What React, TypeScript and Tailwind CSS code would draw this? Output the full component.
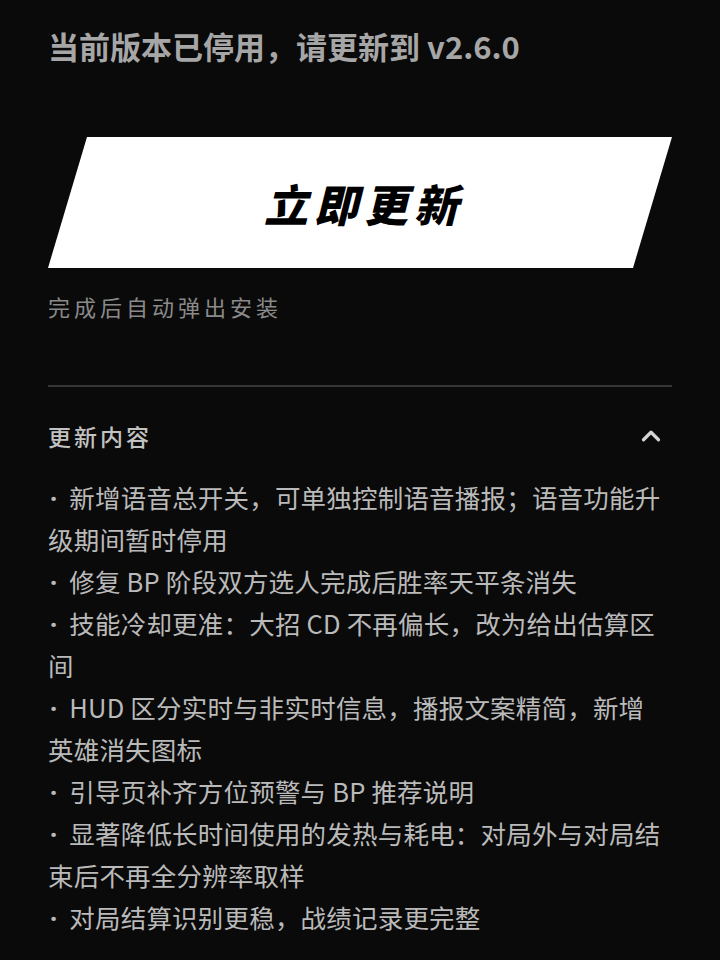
import { ChevronUp } from "lucide-react";

const notes = [
  "新增语音总开关，可单独控制语音播报；语音功能升级期间暂时停用",
  "修复 BP 阶段双方选人完成后胜率天平条消失",
  "技能冷却更准：大招 CD 不再偏长，改为给出估算区间",
  "HUD 区分实时与非实时信息，播报文案精简，新增英雄消失图标",
  "引导页补齐方位预警与 BP 推荐说明",
  "显著降低长时间使用的发热与耗电：对局外与对局结束后不再全分辨率取样",
  "对局结算识别更稳，战绩记录更完整",
];

export default function App() {
  return (
    <div className="min-h-[960px] w-full bg-[#0a0a0a] font-['Noto_Sans_CJK_SC','Noto_Sans',sans-serif] px-12 pt-[26px]">
      <h1 className="text-[31px] leading-[40px] font-bold text-[#a6a6a6]">
        当前版本已停用，请更新到 v2.6.0
      </h1>

      <button className="mt-[71px] flex h-[131px] w-full items-center justify-center bg-white [clip-path:polygon(39px_0,100%_0,calc(100%_-_39px)_100%,0_100%)]">
        <span className="text-[44px] font-black italic tracking-[6px] text-black pl-[8px]">立即更新</span>
      </button>

      <p className="mt-[23px] text-[22px] leading-[30px] tracking-[4px] text-[#8a8a8a]">完成后自动弹出安装</p>

      <div className="mt-[64px] h-[2px] w-full bg-[#363636]" />

      <div className="mt-[29px] flex h-[40px] items-center justify-between">
        <span className="text-[23px] font-medium tracking-[3px] text-[#c2c2c2]">更新内容</span>
        <ChevronUp className="mr-[6px] h-[30px] w-[30px] text-[#d4d4d4]" strokeWidth={2.6} />
      </div>

      <ul className="mt-[20px] pr-[8px] text-[25.5px] leading-[42px] tracking-[0.2px] text-[#bababa]">
        {notes.map((n, i) => (
          <li key={i}>
            <span className="font-['Noto_Sans',sans-serif] font-bold leading-none ml-[2px] mr-[6px]">·</span> {n}
          </li>
        ))}
      </ul>
    </div>
  );
}
